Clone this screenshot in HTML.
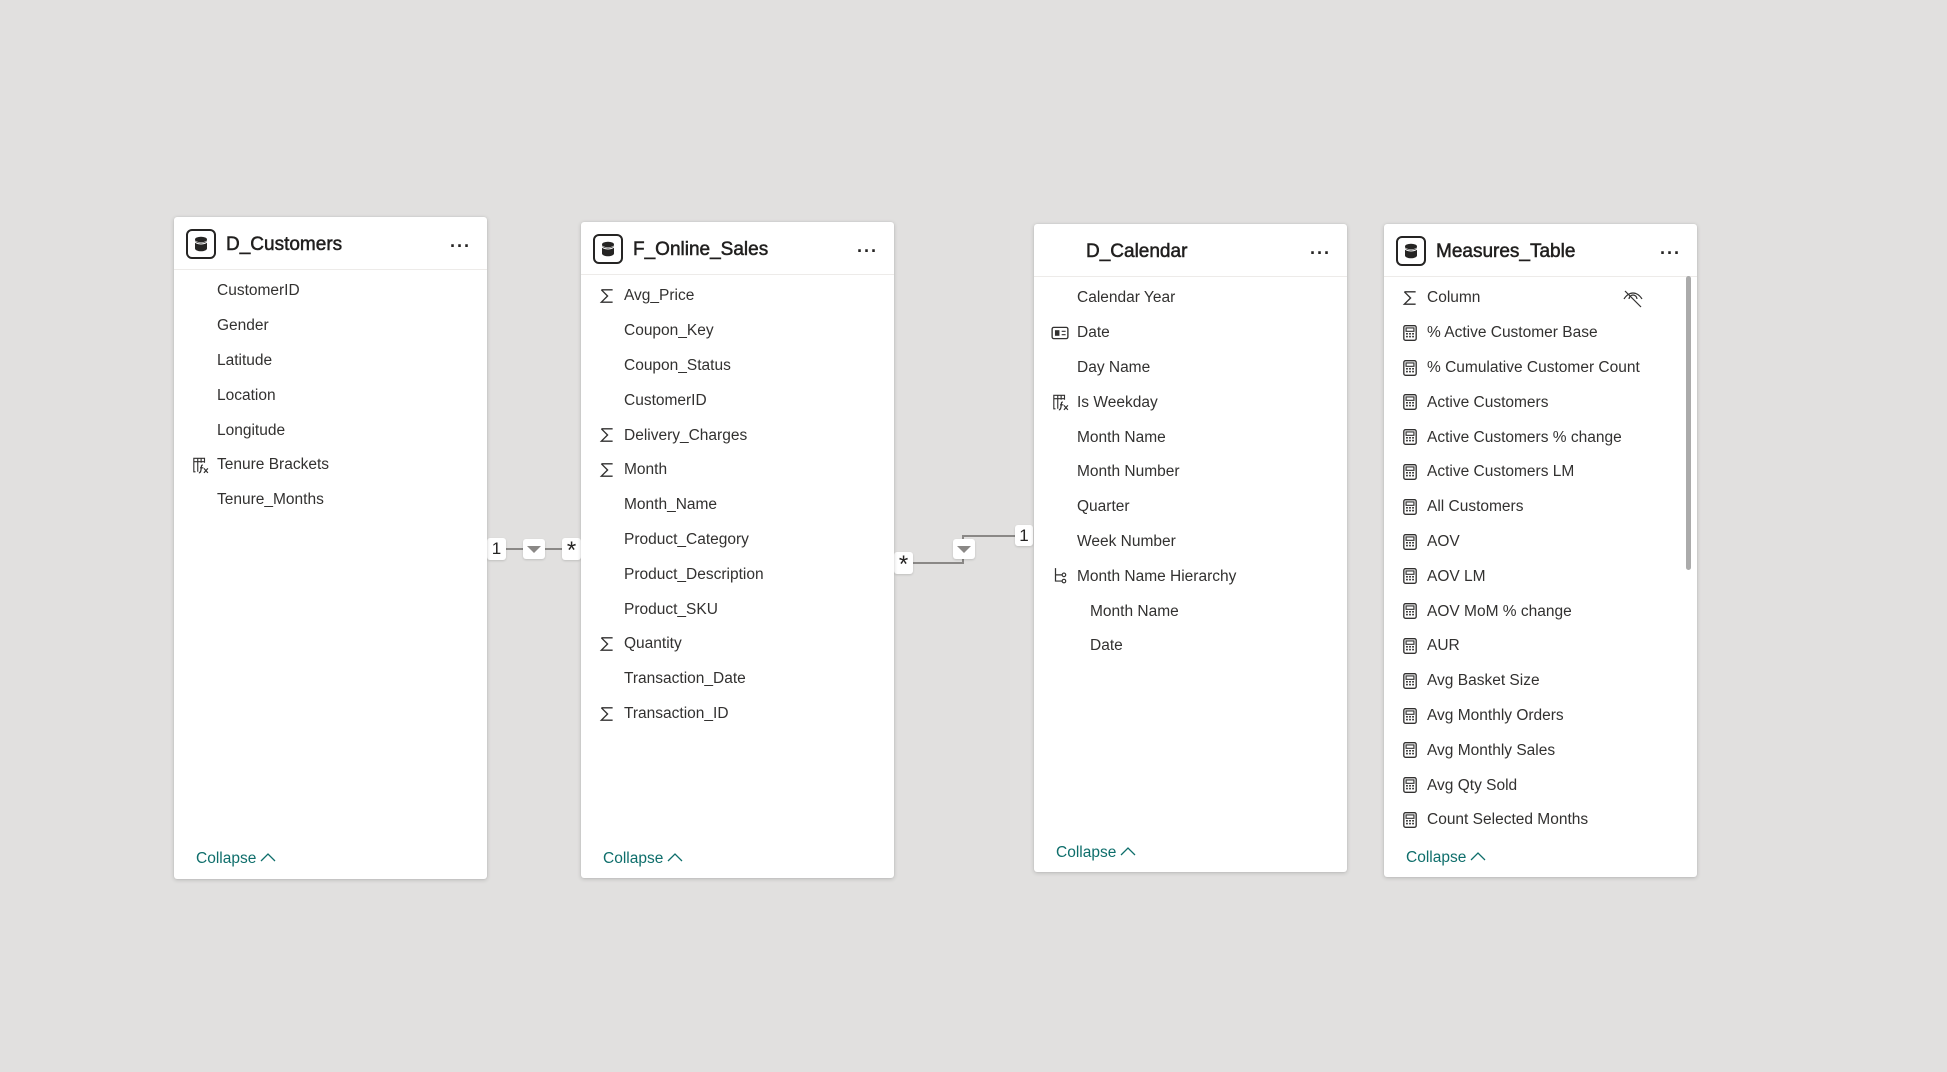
<!DOCTYPE html>
<html><head><meta charset="utf-8">
<style>
*{margin:0;padding:0;box-sizing:border-box}
body{width:1947px;height:1072px;background:#e1e0df;font-family:"Segoe UI","Liberation Sans",sans-serif;position:relative;overflow:hidden;color:#252423}
.card{position:absolute;background:#fff;border-radius:3px;box-shadow:0 1px 4px rgba(0,0,0,.18),0 0 1px rgba(0,0,0,.12)}
.hdr{position:absolute;left:0;right:0;top:0;height:53px;border-bottom:1px solid #edebe9}
.dbi{position:absolute;left:12px;top:12px;width:30px;height:30px;border:2px solid #252423;border-radius:6px}
.dbi svg{position:absolute;left:6px;top:5px}
.title{position:absolute;left:52px;top:17px;font-size:19px;font-weight:400;-webkit-text-stroke:0.5px #201f1e;color:#201f1e;white-space:nowrap}
.dots{position:absolute;left:276px;top:19px;font-size:18px;letter-spacing:1px;font-weight:700;color:#252423}
.list{position:absolute;left:0;right:0;top:57px}
.row{height:34.8px;position:relative;font-size:15.5px;color:#323130;display:flex;align-items:center;padding-left:43px;white-space:nowrap}
.row.sub{padding-left:56px}
.row svg{position:absolute;left:17px;top:8px}
.col{position:absolute;font-size:15.5px;color:#0e6e6b;white-space:nowrap}
.col svg{vertical-align:middle;margin-left:4px;margin-top:-4px}
.lbl{position:absolute;background:#fff;border-radius:3px;box-shadow:0 1px 2px rgba(0,0,0,.15);font-size:17px;text-align:center;color:#252423}
.line{position:absolute;background:#8a8886}
.tri{position:absolute;width:22px;height:20px;background:#fff;border-radius:3px;box-shadow:0 1px 2px rgba(0,0,0,.15)}
.tri:after{content:"";position:absolute;left:4px;top:7px;border-left:7px solid transparent;border-right:7px solid transparent;border-top:7px solid #8a8886}
</style></head><body>

<div class="line" style="left:505px;top:548px;width:58px;height:1.5px"></div>
<div class="lbl" style="left:487px;top:538px;width:19px;height:22px;line-height:22px">1</div>
<div class="tri" style="left:523px;top:539px"></div>
<div class="lbl" style="left:562px;top:538px;width:19px;height:22px;line-height:26px;font-size:24px">*</div>

<div class="line" style="left:912px;top:562px;width:52px;height:1.5px"></div>
<div class="line" style="left:962px;top:535px;width:1.5px;height:28px"></div>
<div class="line" style="left:962px;top:535px;width:54px;height:1.5px"></div>
<div class="lbl" style="left:894px;top:552px;width:19px;height:22px;line-height:26px;font-size:24px">*</div>
<div class="tri" style="left:953px;top:539px"></div>
<div class="lbl" style="left:1015px;top:525px;width:18px;height:21px;line-height:21px">1</div>

<svg width="0" height="0" style="position:absolute">
<defs>
<symbol id="sig" viewBox="0 0 16 16"><path d="M3 2.5H13M3 2.5L8.5 8L3 13.5H13" fill="none" stroke="#323130" stroke-width="1.2"/></symbol>
<symbol id="calc" viewBox="0 0 16 16"><rect x="2.5" y="1.5" width="11" height="13" rx="1.5" fill="none" stroke="#323130" stroke-width="1.2"/><rect x="4.5" y="3.5" width="7" height="3" fill="none" stroke="#323130" stroke-width="1"/><g fill="#323130"><rect x="4.5" y="8" width="1.6" height="1.4"/><rect x="7.2" y="8" width="1.6" height="1.4"/><rect x="9.9" y="8" width="1.6" height="1.4"/><rect x="4.5" y="10.5" width="1.6" height="1.4"/><rect x="7.2" y="10.5" width="1.6" height="1.4"/><rect x="9.9" y="10.5" width="1.6" height="1.4"/></g></symbol>
<symbol id="fx" viewBox="0 0 16 16"><path d="M4 14H2.5V2H12V6M2.5 5H12M6 2V14M9 2V6" fill="none" stroke="#323130" stroke-width="1"/><path d="M10.5 8C9 8 9.3 9 9 11.5S8.3 15 7 15M8 10.5H11M11.5 11L15 15M15 11L11.5 15" fill="none" stroke="#323130" stroke-width="1.1"/></symbol>
<symbol id="cal" viewBox="0 0 16 16"><rect x="1" y="3" width="14" height="10" rx="1.5" fill="none" stroke="#323130" stroke-width="1.2"/><rect x="3.5" y="5.5" width="4" height="5" fill="#323130"/><path d="M9.5 6.5H13M9.5 9.5H13" stroke="#323130" stroke-width="1.1"/></symbol>
<symbol id="hier" viewBox="0 0 16 16"><path d="M4 1V12.5H10M4 7H10" fill="none" stroke="#323130" stroke-width="1.1"/><circle cx="11.5" cy="7" r="1.6" fill="none" stroke="#323130" stroke-width="1"/><circle cx="11.5" cy="12.5" r="1.6" fill="none" stroke="#323130" stroke-width="1"/></symbol>
<symbol id="db" viewBox="0 0 14 16"><ellipse cx="7" cy="3.5" rx="6" ry="2.8" fill="#252423"/><path d="M1 4V12.5C1 14 3.7 15.3 7 15.3S13 14 13 12.5V4C13 5.5 10.3 6.8 7 6.8S1 5.5 1 4Z" fill="#252423"/><path d="M1 5.3C1 6.8 3.7 8 7 8S13 6.8 13 5.3" fill="none" stroke="#fff" stroke-width="1"/></symbol>
</defs></svg>

<div class="card" style="left:174px;top:217px;width:313px;height:662px">
 <div class="hdr"><div class="dbi"><svg width="14" height="16"><use href="#db"/></svg></div><div class="title">D_Customers</div><div class="dots">···</div></div>
 <div class="list">
  <div class="row">CustomerID</div>
  <div class="row">Gender</div>
  <div class="row">Latitude</div>
  <div class="row">Location</div>
  <div class="row">Longitude</div>
  <div class="row"><svg width="18" height="18"><use href="#fx"/></svg>Tenure Brackets</div>
  <div class="row">Tenure_Months</div>
 </div>
 <div class="col" style="left:22px;top:633px">Collapse<svg width="16" height="10"><path d="M1 9L8 2L15 9" fill="none" stroke="#0e6e6b" stroke-width="1.3"/></svg></div>
</div>

<div class="card" style="left:581px;top:222px;width:313px;height:656px">
 <div class="hdr"><div class="dbi"><svg width="14" height="16"><use href="#db"/></svg></div><div class="title">F_Online_Sales</div><div class="dots">···</div></div>
 <div class="list">
  <div class="row"><svg width="18" height="18"><use href="#sig"/></svg>Avg_Price</div>
  <div class="row">Coupon_Key</div>
  <div class="row">Coupon_Status</div>
  <div class="row">CustomerID</div>
  <div class="row"><svg width="18" height="18"><use href="#sig"/></svg>Delivery_Charges</div>
  <div class="row"><svg width="18" height="18"><use href="#sig"/></svg>Month</div>
  <div class="row">Month_Name</div>
  <div class="row">Product_Category</div>
  <div class="row">Product_Description</div>
  <div class="row">Product_SKU</div>
  <div class="row"><svg width="18" height="18"><use href="#sig"/></svg>Quantity</div>
  <div class="row">Transaction_Date</div>
  <div class="row"><svg width="18" height="18"><use href="#sig"/></svg>Transaction_ID</div>
 </div>
 <div class="col" style="left:22px;top:628px">Collapse<svg width="16" height="10"><path d="M1 9L8 2L15 9" fill="none" stroke="#0e6e6b" stroke-width="1.3"/></svg></div>
</div>

<div class="card" style="left:1034px;top:224px;width:313px;height:648px">
 <div class="hdr"><div class="title">D_Calendar</div><div class="dots">···</div></div>
 <div class="list">
  <div class="row">Calendar Year</div>
  <div class="row"><svg width="18" height="18"><use href="#cal"/></svg>Date</div>
  <div class="row">Day Name</div>
  <div class="row"><svg width="18" height="18"><use href="#fx"/></svg>Is Weekday</div>
  <div class="row">Month Name</div>
  <div class="row">Month Number</div>
  <div class="row">Quarter</div>
  <div class="row">Week Number</div>
  <div class="row"><svg width="18" height="18"><use href="#hier"/></svg>Month Name Hierarchy</div>
  <div class="row sub">Month Name</div>
  <div class="row sub">Date</div>
 </div>
 <div class="col" style="left:22px;top:620px">Collapse<svg width="16" height="10"><path d="M1 9L8 2L15 9" fill="none" stroke="#0e6e6b" stroke-width="1.3"/></svg></div>
</div>

<div class="card" style="left:1384px;top:224px;width:313px;height:653px">
 <div class="hdr"><div class="dbi"><svg width="14" height="16"><use href="#db"/></svg></div><div class="title">Measures_Table</div><div class="dots">···</div></div>
 <div style="position:absolute;left:302px;top:52px;width:5px;height:294px;background:#ababab;border-radius:3px"></div>
 <div class="list">
  <div class="row"><svg width="18" height="18"><use href="#sig"/></svg>Column
   <svg style="left:238px;top:8px" width="22" height="20" viewBox="0 0 22 20"><path d="M2 10C5 5 9 4 11 4S17 5 20 10M7 10A4 4 0 0 1 15 10" fill="none" stroke="#323130" stroke-width="1.2"/><path d="M3 2L19 18" stroke="#323130" stroke-width="1.2"/></svg></div>
  <div class="row"><svg width="18" height="18"><use href="#calc"/></svg>% Active Customer Base</div>
  <div class="row"><svg width="18" height="18"><use href="#calc"/></svg>% Cumulative Customer Count</div>
  <div class="row"><svg width="18" height="18"><use href="#calc"/></svg>Active Customers</div>
  <div class="row"><svg width="18" height="18"><use href="#calc"/></svg>Active Customers % change</div>
  <div class="row"><svg width="18" height="18"><use href="#calc"/></svg>Active Customers LM</div>
  <div class="row"><svg width="18" height="18"><use href="#calc"/></svg>All Customers</div>
  <div class="row"><svg width="18" height="18"><use href="#calc"/></svg>AOV</div>
  <div class="row"><svg width="18" height="18"><use href="#calc"/></svg>AOV LM</div>
  <div class="row"><svg width="18" height="18"><use href="#calc"/></svg>AOV MoM % change</div>
  <div class="row"><svg width="18" height="18"><use href="#calc"/></svg>AUR</div>
  <div class="row"><svg width="18" height="18"><use href="#calc"/></svg>Avg Basket Size</div>
  <div class="row"><svg width="18" height="18"><use href="#calc"/></svg>Avg Monthly Orders</div>
  <div class="row"><svg width="18" height="18"><use href="#calc"/></svg>Avg Monthly Sales</div>
  <div class="row"><svg width="18" height="18"><use href="#calc"/></svg>Avg Qty Sold</div>
  <div class="row"><svg width="18" height="18"><use href="#calc"/></svg>Count Selected Months</div>
 </div>
 <div class="col" style="left:22px;top:625px">Collapse<svg width="16" height="10"><path d="M1 9L8 2L15 9" fill="none" stroke="#0e6e6b" stroke-width="1.3"/></svg></div>
</div>
</body></html>
